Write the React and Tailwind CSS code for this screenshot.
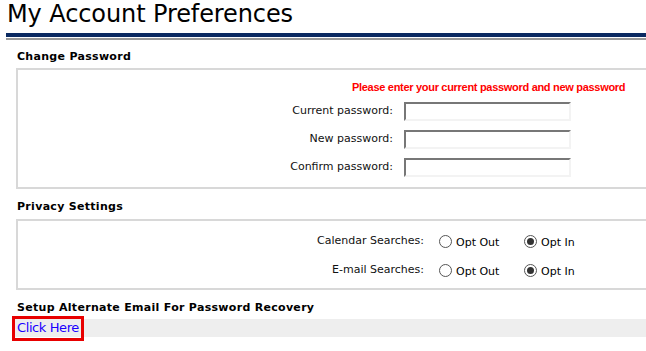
import { useState } from "react";

const font = "font-['Verdana','DejaVu_Sans',sans-serif]";

function Radio({ checked }) {
  return (
    <span className="flex h-[13px] w-[13px] items-center justify-center rounded-full border border-[#555] bg-white">
      {checked && <span className="h-[7px] w-[7px] rounded-full bg-[#333]" />}
    </span>
  );
}

function PasswordRow({ label }) {
  return (
    <div className="flex h-[28px] items-center">
      <span className="w-[386px] pr-[11px] text-right text-[11px] text-[#111]">{label}</span>
      <span className="h-[19px] w-[167px] border-2 border-t-[#777] border-l-[#777] border-b-[#f3f3f3] border-r-[#f3f3f3] bg-white" />
    </div>
  );
}

function PrivacyRow({ label, value }) {
  return (
    <div className="flex h-[29px] items-center">
      <span className="w-[421px] pr-[15px] text-right text-[11px] text-[#111]">{label}</span>
      <span className="flex w-[85px] items-center gap-[4px]">
        <Radio checked={value === "out"} />
        <span className="mt-[3px] text-[11px]">Opt Out</span>
      </span>
      <span className="flex items-center gap-[4px]">
        <Radio checked={value === "in"} />
        <span className="mt-[3px] text-[11px]">Opt In</span>
      </span>
    </div>
  );
}

export default function App() {
  const [calendar] = useState("in");
  const [email] = useState("in");

  return (
    <div className={`${font} h-[351px] w-[646px] overflow-hidden bg-white text-black`}>
      <h1 className="h-[33px] pl-[7px] text-[24px] leading-[28px] tracking-[-0.1px] text-black">My Account Preferences</h1>
      <div className="ml-[6px] h-[4px] bg-[#0b2a62]" />
      <div className="ml-[6px] mt-[1px] h-[2px] bg-[#999]" />

      <h2 className="mt-[10px] h-[14px] pl-[17px] text-[11px] font-bold leading-[14px] tracking-[0.3px]">Change Password</h2>
      <div className="ml-[16px] mt-[4px] h-[121px] w-[640px] border-2 border-[#d8d8d8] pt-[10px]">
        <p className="whitespace-nowrap pl-[334px] font-['Liberation_Sans',sans-serif] text-[11px] font-bold leading-[14px] tracking-[-0.3px] text-[#ff0000]">
          Please enter your current password and new password
        </p>
        <div className="mt-[3px]">
          <PasswordRow label="Current password:" />
          <PasswordRow label="New password:" />
          <PasswordRow label="Confirm password:" />
        </div>
      </div>

      <h2 className="mt-[11px] h-[14px] pl-[17px] text-[11px] font-bold leading-[14px] tracking-[0.3px]">Privacy Settings</h2>
      <div className="ml-[16px] mt-[5px] h-[71px] w-[640px] border-2 border-[#d8d8d8] pt-[6px]">
        <PrivacyRow label="Calendar Searches:" value={calendar} />
        <PrivacyRow label="E-mail Searches:" value={email} />
      </div>

      <h2 className="mt-[11px] h-[14px] pl-[17px] text-[11px] font-bold leading-[14px] tracking-[0.3px]">
        Setup Alternate Email For Password Recovery
      </h2>
      <div className="ml-[12px] mt-[4px] flex h-[18px] items-center bg-[#eeeeee]">
        <a href="#" className="-my-[3px] flex h-[25px] items-center border-[3px] border-[#e80000] px-[2px] text-[13px] tracking-[-0.4px] text-[#1a00ff]">
          Click Here
        </a>
      </div>
    </div>
  );
}
